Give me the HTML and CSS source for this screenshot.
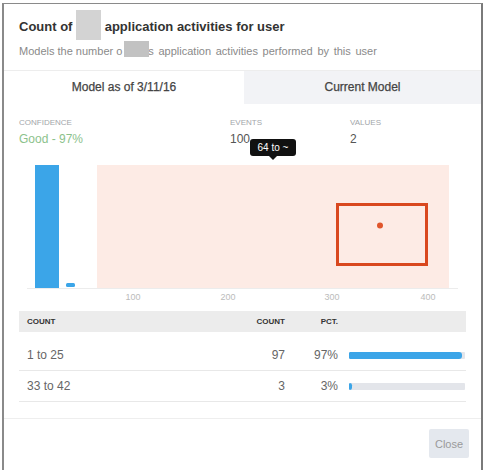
FILE: index.html
```html
<!DOCTYPE html>
<html>
<head>
<meta charset="utf-8">
<link rel="stylesheet" href="styles.css">
</head>
<body>
<div class="modal">
  <div class="header">
    <div class="title">Count of&nbsp;<span class="redact redact-title"></span>&nbsp;application activities for user</div>
    <div class="subtitle">Models the number o<span class="redact redact-sub"></span><span class="sub-rest">s application activities performed by this user</span></div>
  </div>
  <div class="tabs">
    <div class="tab active">Model as of 3/11/16</div>
    <div class="tab">Current Model</div>
  </div>
  <div class="stats">
    <div class="stat">
      <div class="stat-label">Confidence</div>
      <div class="stat-value good">Good - 97%</div>
    </div>
    <div class="stat">
      <div class="stat-label">Events</div>
      <div class="stat-value">100</div>
    </div>
    <div class="stat">
      <div class="stat-label">Values</div>
      <div class="stat-value">2</div>
    </div>
  </div>
  <div class="chart">
    <svg class="chart-svg" width="476" height="160" viewBox="0 0 476 160">
      <rect x="93" y="19" width="352" height="123" fill="#fdebe5"/>
      <line x1="23" y1="142.5" x2="454" y2="142.5" stroke="#ececec" stroke-width="1"/>
      <rect x="31" y="19" width="24" height="123" fill="#3ba5e8"/>
      <rect x="62" y="137" width="9" height="4" rx="1.5" fill="#3ba5e8"/>
      <rect x="333.5" y="58.5" width="89" height="60" fill="none" stroke="#d9481f" stroke-width="3"/>
      <circle cx="376" cy="79.5" r="3" fill="#e0552b"/>
      <g class="axis" font-size="9" fill="#bbbbbb" text-anchor="middle">
        <text x="129" y="154">100</text>
        <text x="224" y="154">200</text>
        <text x="328" y="154">300</text>
        <text x="424" y="154">400</text>
      </g>
    </svg>
    <div class="tooltip">64 to ~</div>
  </div>
  <div class="table">
    <div class="trow thead">
      <div class="c-label">Count</div>
      <div class="c-num">Count</div>
      <div class="c-num">Pct.</div>
      <div></div>
    </div>
    <div class="tbody">
      <div class="trow">
        <div class="c-label">1 to 25</div>
        <div class="c-num">97</div>
        <div class="c-num">97%</div>
        <div class="bar"><div class="bar-fill" style="width:97.5%"></div></div>
      </div>
      <div class="trow">
        <div class="c-label">33 to 42</div>
        <div class="c-num">3</div>
        <div class="c-num">3%</div>
        <div class="bar"><div class="bar-fill" style="width:3px"></div></div>
      </div>
    </div>
  </div>
  <div class="footer">
    <button class="btn-close">Close</button>
  </div>
</div>
</body>
</html>
```

FILE: styles.css
```css
html, body {
  margin: 0;
  padding: 0;
  background: #ffffff;
}
body {
  font-family: "Liberation Sans", Arial, sans-serif;
  color: #333;
}
.modal {
  margin: 3px 0 0 2px;
  width: 477px;
  height: 467px;
  border-top: 1px solid #8a8a8a;
  border-left: 2px solid #8a8a8a;
  border-right: 2px solid #7a7a7a;
  box-sizing: content-box;
  background: #fff;
  overflow: hidden;
}
.header {
  padding: 14px 16px 12px 15px;
  border-bottom: 1px solid #ededed;
}
.title {
  font-size: 13px;
  font-weight: bold;
  line-height: 18px;
  color: #333;
  white-space: nowrap;
}
.subtitle {
  margin-top: 8px;
  font-size: 11px;
  line-height: 14px;
  color: #8a8a8a;
  white-space: nowrap;
}
.sub-rest {
  margin-left: -1px;
  word-spacing: 1.6px;
}
.redact {
  position: relative;
  display: inline-block;
  width: 25px;
  height: 0;
}
.redact::before {
  content: "";
  position: absolute;
  left: 0;
  right: 0;
}
.redact-sub {
  margin-left: 2px;
}
.redact-title::before {
  top: -21px;
  height: 30px;
  background: #d3d3d3;
}
.redact-sub::before {
  top: -14px;
  height: 16px;
  background: #c2c2c2;
}
.tabs {
  display: flex;
  height: 33px;
}
.tab {
  flex: 0 0 237px;
  text-align: center;
  line-height: 33px;
  font-size: 12px;
  color: #444;
  background: #f2f3f6;
  -webkit-text-stroke: 0.25px #444;
}
.tab.active {
  flex: 0 0 240px;
  background: #fff;
}
.stats {
  display: grid;
  grid-template-columns: 211px 120px auto;
  padding: 14px 0 0 15px;
}
.stat-label {
  font-size: 8px;
  line-height: 10px;
  text-transform: uppercase;
  color: #a2a6aa;
}
.stat-value {
  margin-top: 4px;
  font-size: 12px;
  line-height: 14px;
  color: #555;
}
.stat-value.good {
  color: #8cc28c;
}
.chart {
  position: relative;
  height: 160px;
}
.chart-svg {
  display: block;
  font-family: "Liberation Sans", Arial, sans-serif;
}
.tooltip {
  position: absolute;
  left: 246px;
  top: -7px;
  width: 46px;
  height: 17px;
  line-height: 17px;
  border-radius: 3px;
  background: #111;
  color: #fff;
  font-size: 10px;
  text-align: center;
}
.tooltip::after {
  content: "";
  position: absolute;
  left: 19px;
  bottom: -4px;
  border-left: 4px solid transparent;
  border-right: 4px solid transparent;
  border-top: 4px solid #111;
}
.table {
  margin: 5px 0 0 15px;
  width: 447px;
}
.trow {
  display: grid;
  grid-template-columns: 206px 60px 53px 117px;
  column-gap: 0;
  align-items: center;
  height: 30px;
  border-bottom: 1px solid #e8e8e8;
  font-size: 12px;
  color: #666;
}
.trow.thead {
  height: 21px;
  border-bottom: none;
  background: #ececec;
  font-size: 8px;
  font-weight: bold;
  text-transform: uppercase;
  color: #333;
}
.tbody {
  padding-top: 8px;
}
.c-label {
  padding-left: 8px;
}
.c-num {
  text-align: right;
}
.bar {
  margin-left: 11px;
  width: 116px;
  height: 7px;
  background: #e3e5ea;
  border-radius: 1px;
  overflow: hidden;
}
.bar-fill {
  height: 100%;
  background: #3ba5e8;
  border-radius: 1px 3px 3px 1px;
}
.footer {
  margin-top: 16px;
  border-top: 1px solid #eeeeee;
  padding: 10px 12px 0 0;
  display: flex;
  justify-content: flex-end;
}
.btn-close {
  width: 40px;
  height: 29px;
  padding: 0;
  border: none;
  border-radius: 2px;
  background: #e4e8ee;
  color: #9a9a9a;
  font-family: "Liberation Sans", Arial, sans-serif;
  font-size: 11px;
}
```
